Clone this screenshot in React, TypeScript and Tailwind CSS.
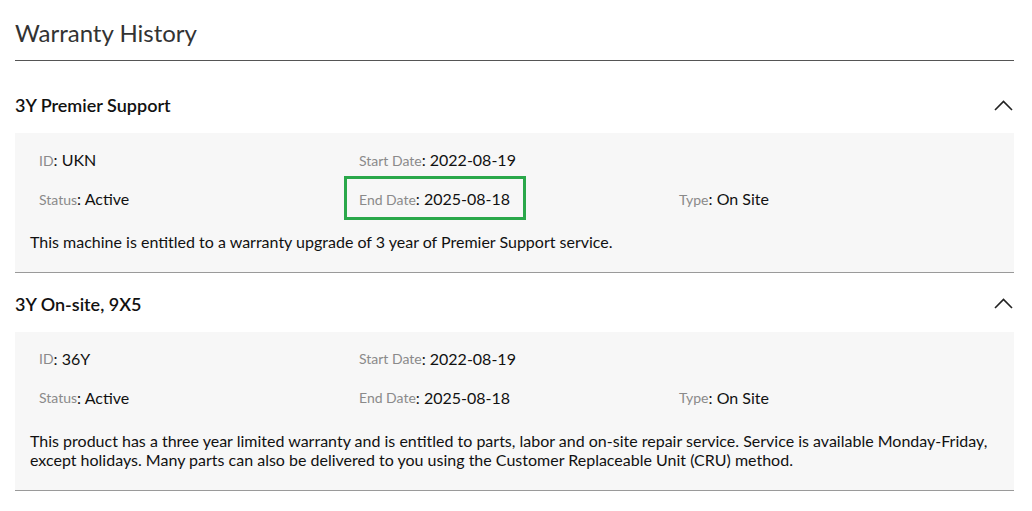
const sections = [
  {
    title: '3Y Premier Support',
    id: 'UKN',
    start: '2022-08-19',
    end: '2025-08-18',
    status: 'Active',
    type: 'On Site',
    highlight: true,
    text: 'This machine is entitled to a warranty upgrade of 3 year of Premier Support service.',
  },
  {
    title: '3Y On-site, 9X5',
    id: '36Y',
    start: '2022-08-19',
    end: '2025-08-18',
    status: 'Active',
    type: 'On Site',
    highlight: false,
    text: 'This product has a three year limited warranty and is entitled to parts, labor and on-site repair service. Service is available Monday-Friday, except holidays. Many parts can also be delivered to you using the Customer Replaceable Unit (CRU) method.',
  },
];

const Field = ({ label, value, boxed }: { label: string; value: string; boxed?: boolean }) => (
  <div className="relative h-6 flex items-center pl-[9px]">
    {boxed && (
      <span className="absolute left-[-6px] top-[-11px] w-[182px] h-[44px] border-[3px] border-[#2aa84a] pointer-events-none" />
    )}
    <span className="text-[14px] text-[#8a8a8a]">{label}</span>
    <span className="text-[16px] text-[#111]">: {value}</span>
  </div>
);

const Chevron = () => (
  <svg width="19" height="11" viewBox="0 0 19 11" fill="none" className="mr-[1px]">
    <polyline points="1,10 9.5,1.5 18,10" stroke="#222" strokeWidth="1.6" />
  </svg>
);

export default function App() {
  return (
    <div className="min-h-screen bg-white pl-[15px] pr-[18px] font-['Lato','Liberation_Sans',sans-serif]">
      <h2 className="pt-[17px] pb-[11px] text-[24px] leading-8 text-[#333] border-b border-[#555]">
        Warranty History
      </h2>

      <div className="mt-[13px]">
        {sections.map((s) => (
          <div key={s.title} className="border-b border-[#9a9a9a]">
            <div className="flex items-center justify-between pt-[19px] pb-[16px]">
              <h3 className="text-[18px] leading-6 font-semibold text-[#111]">{s.title}</h3>
              <Chevron />
            </div>
            <div className="bg-[#f7f7f7] px-[15px] pt-[15px] pb-[20px]">
              <div className="grid grid-cols-[320px_320px_1fr] gap-y-[15px]">
                <Field label="ID" value={s.id} />
                <Field label="Start Date" value={s.start} />
                <div />
                <Field label="Status" value={s.status} />
                <Field label="End Date" value={s.end} boxed={s.highlight} />
                <Field label="Type" value={s.type} />
              </div>
              <p className="mt-[21px] text-[16px] leading-[19.5px] text-[#111]">{s.text}</p>
            </div>
          </div>
        ))}
      </div>
    </div>
  );
}
